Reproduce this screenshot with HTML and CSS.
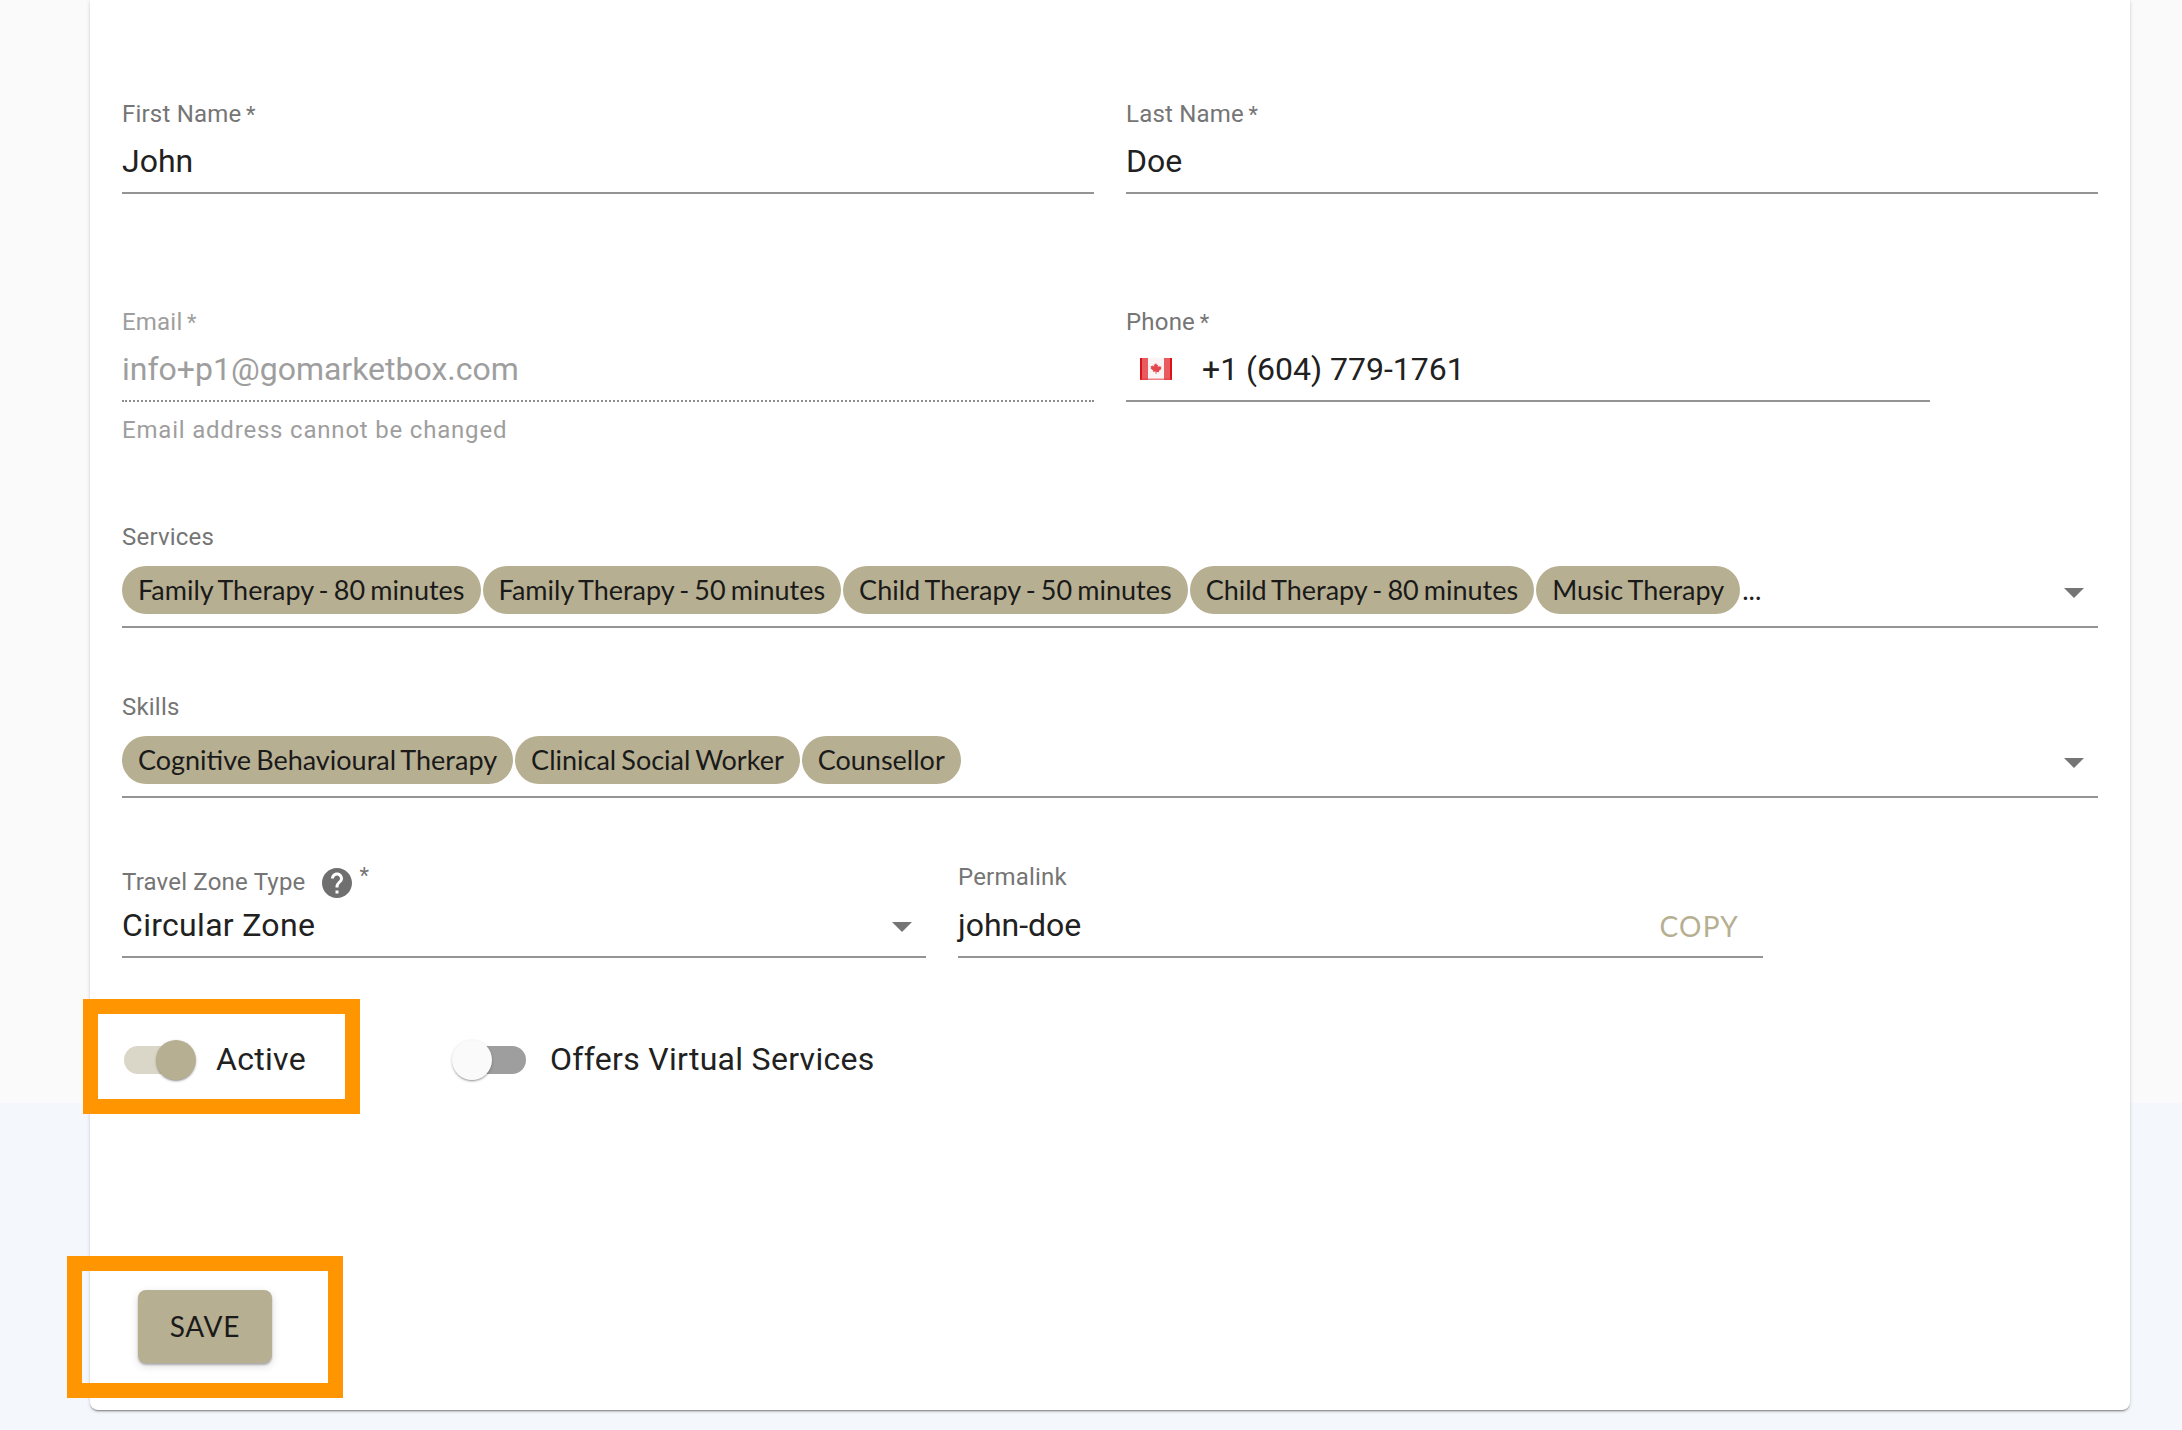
FILE: index.html
```html
<!DOCTYPE html>
<html lang="en">
<head>
<meta charset="utf-8">
<title>Profile</title>
<link rel="stylesheet" href="styles.css">
</head>
<body>
<main class="card">
  <div class="row row-name">
    <div class="field half">
      <label class="label">First Name<span class="req"> *</span></label>
      <div class="control value-text">John</div>
    </div>
    <div class="field half">
      <label class="label">Last Name<span class="req"> *</span></label>
      <div class="control value-text">Doe</div>
    </div>
  </div>

  <div class="row row-contact">
    <div class="field half disabled">
      <label class="label">Email<span class="req"> *</span></label>
      <div class="control value-text">info+p1@gomarketbox.com</div>
      <p class="helper">Email address cannot be changed</p>
    </div>
    <div class="field phone">
      <label class="label">Phone<span class="req"> *</span></label>
      <div class="control value-text phone-control">
        <svg class="flag" viewBox="0 0 32 22" aria-hidden="true">
          <rect width="32" height="22" fill="#fbf4f4"/>
          <rect width="8" height="22" fill="#ea5b60"/>
          <rect x="24" width="8" height="22" fill="#ea5b60"/>
          <rect width="2" height="22" fill="#d81418"/>
          <rect x="30" width="2" height="22" fill="#d81418"/>
          <rect y="20.500" width="32" height="1.500" fill="#e2383d" opacity=".6"/>
          <path d="M16 5l1.100 2.200 1.100-.6-.4 2.700 1.500-1.500.4 1 1.800-.3-.7 1.900.8.400-2.800 2.300.4 1.100-2.800-.3V16h-.8v-2.600l-2.800.3.400-1.100-2.800-2.300.8-.4-.7-1.900 1.800.3.4-1 1.500 1.500-.4-2.700 1.100.6z" fill="#e4474c"/>
        </svg>
        <span>+1 (604) 779-1761</span>
      </div>
    </div>
  </div>

  <div class="field chips-field services">
    <label class="label">Services</label>
    <div class="control chips-control">
      <span class="chip">Family Therapy - 80 minutes</span>
      <span class="chip">Family Therapy - 50 minutes</span>
      <span class="chip">Child Therapy - 50 minutes</span>
      <span class="chip">Child Therapy - 80 minutes</span>
      <span class="chip">Music Therapy</span>
      <span class="more">...</span>
      <span class="arrow"></span>
    </div>
  </div>

  <div class="field chips-field skills">
    <label class="label">Skills</label>
    <div class="control chips-control">
      <span class="chip">Cognitive Behavioural Therapy</span>
      <span class="chip">Clinical Social Worker</span>
      <span class="chip">Counsellor</span>
      <span class="arrow"></span>
    </div>
  </div>

  <div class="row row-travel">
    <div class="field travel">
      <label class="label label-help">Travel Zone Type
        <svg class="help" viewBox="2 2 20 20" aria-hidden="true"><path d="M12 2C6.480 2 2 6.480 2 12s4.480 10 10 10 10-4.480 10-10S17.520 2 12 2zm1 17h-2v-2h2v2zm2.070-7.750l-.9.920C13.450 12.900 13 13.500 13 15h-2v-.5c0-1.100.45-2.100 1.170-2.830l1.240-1.260c.37-.36.59-.86.59-1.410 0-1.100-.9-2-2-2s-2 .9-2 2H8c0-2.210 1.790-4 4-4s4 1.790 4 4c0 .88-.36 1.680-.93 2.250z"/></svg>
        <span class="req req-up">*</span>
      </label>
      <div class="control value-text select-control spaced">Circular Zone<span class="arrow"></span></div>
    </div>
    <div class="field permalink">
      <label class="label">Permalink</label>
      <div class="control value-text select-control">john-doe<span class="copy">COPY</span></div>
    </div>
  </div>

  <div class="switches">
    <div class="switch-item">
      <span class="switch on"><span class="track"></span><span class="thumb"></span></span>
      <span class="switch-label">Active</span>
    </div>
    <div class="switch-item">
      <span class="switch"><span class="track"></span><span class="thumb"></span></span>
      <span class="switch-label">Offers Virtual Services</span>
    </div>
  </div>

  <button class="save" type="button">SAVE</button>

  <div class="callout callout-active"></div>
  <div class="callout callout-save"></div>
</main>
</body>
</html>
```

FILE: styles.css
```css
* { box-sizing: border-box; }

html, body { margin: 0; height: 1430px; overflow: hidden; }

body {
  background: linear-gradient(#fafafa 1103px, #f4f7fb 1103px);
  font-family: Roboto, sans-serif;
  color: #212121;
}

.card {
  position: relative;
  width: 2040px;
  height: 1410px;
  margin-left: 90px;
  padding: 98px 32px 0;
  background: #fff;
  border-radius: 0 0 8px 8px;
  box-shadow: 0 2px 2px -1px rgba(0,0,0,.45), 0 1px 4px rgba(0,0,0,.14);
}

.row { display: flex; gap: 32px; align-items: flex-end; }
.row-contact { margin-top: 112px; height: 215px; align-items: flex-start; }
.row-travel { margin-top: 63px; }

.field { display: flex; flex-direction: column; }
.half { width: 972px; }
.phone, .travel { width: 804px; }
.permalink { width: 805px; }

.label {
  display: block;
  height: 32px;
  font-size: 24px;
  line-height: 32px;
  letter-spacing: .2px;
  color: #757575;
}

.req { margin-left: -1px; font-size: 22px; }

.control { border-bottom: 2px solid #949494; }

.value-text {
  height: 64px;
  font-size: 32px;
  line-height: 62px;
  color: #212121;
}

.row-contact .control { height: 64px; line-height: 62px; }

.disabled .label,
.disabled .value-text,
.helper { color: #9e9e9e; }

.disabled .control { border-bottom: 2px dotted #8c8c8c; }

.helper {
  margin: 12px 0 0;
  font-size: 24px;
  line-height: 32px;
  letter-spacing: .8px;
}

.phone-control { display: flex; align-items: center; padding-left: 14px; }
.flag { width: 32px; height: 22px; margin-right: 30px; flex: none; }

.skills { margin-top: 63px; }

.chips-control {
  position: relative;
  display: flex;
  align-items: flex-start;
  gap: 2px;
  height: 75px;
  padding-top: 13px;
}

.chip {
  height: 48px;
  padding: 0 16px;
  border-radius: 24px;
  background: #b7af91;
  color: #1a1a1a;
  font-family: Lato, sans-serif;
  font-size: 27px;
  word-spacing: -1.800px;
  line-height: 48px;
  white-space: nowrap;
}

.more {
  font-family: Lato, sans-serif;
  font-size: 27px;
  line-height: 48px;
  color: #212121;
}

.arrow {
  position: absolute;
  right: 14px;
  top: 35px;
  width: 0;
  height: 0;
  border-left: 10px solid transparent;
  border-right: 10px solid transparent;
  border-top: 10px solid #757575;
}

.label-help { display: flex; align-items: center; }
.help { width: 30px; height: 30px; margin: 2px 8px 0 16px; fill: #6f6f6f; flex: none; }
.req-up { align-self: flex-start; line-height: 24px; margin-left: 0; margin-top: -2px; }

.select-control {
  position: relative;
  height: 60px;
  line-height: 54px;
}

.spaced { letter-spacing: .3px; }

.select-control .arrow { top: 24px; }

.permalink .select-control { height: 65px; padding-top: 5px; }

.copy {
  position: absolute;
  right: 24px;
  top: 6px;
  font-family: Lato, sans-serif;
  font-size: 28px;
  line-height: 54px;
  letter-spacing: 1.200px;
  color: #b7af91;
}

.switches {
  display: flex;
  align-items: center;
  gap: 152px;
  height: 80px;
  margin-top: 62px;
  padding-left: 2px;
}

.switch-item { display: flex; align-items: center; gap: 20px; }

.switch { position: relative; display: block; width: 72px; height: 40px; flex: none; }

.track {
  position: absolute;
  left: 0;
  top: 6px;
  width: 68px;
  height: 28px;
  border-radius: 14px;
  background: #9e9e9e;
}

.thumb {
  position: absolute;
  left: -6px;
  top: 0;
  width: 40px;
  height: 40px;
  border-radius: 50%;
  background: #fafafa;
  box-shadow: 0 2px 2px -1px rgba(0,0,0,.3), 0 1px 3px rgba(0,0,0,.2);
}

.switch.on .track { background: #dbd7c8; }
.switch.on .thumb { left: 32px; background: #b7af91; }

.switch-label { padding-bottom: 2px; font-size: 32px; line-height: 40px; letter-spacing: .3px; color: #212121; }

.save {
  display: block;
  width: 134px;
  height: 73px;
  margin: 190px 0 0 16px;
  padding: 0 0 2px;
  border: 0;
  border-radius: 8px;
  background: #b7af91;
  color: #1a1a1a;
  font-family: Lato, sans-serif;
  font-size: 28px;
  letter-spacing: .8px;
  box-shadow: 0 2px 2px rgba(0,0,0,.25), 0 3px 8px rgba(0,0,0,.14);
}

.callout {
  position: absolute;
  border: 15px solid #ff9500;
}

.callout-active { left: -7px; top: 999px; width: 277px; height: 115px; }
.callout-save { left: -23px; top: 1256px; width: 276px; height: 142px; }
```
